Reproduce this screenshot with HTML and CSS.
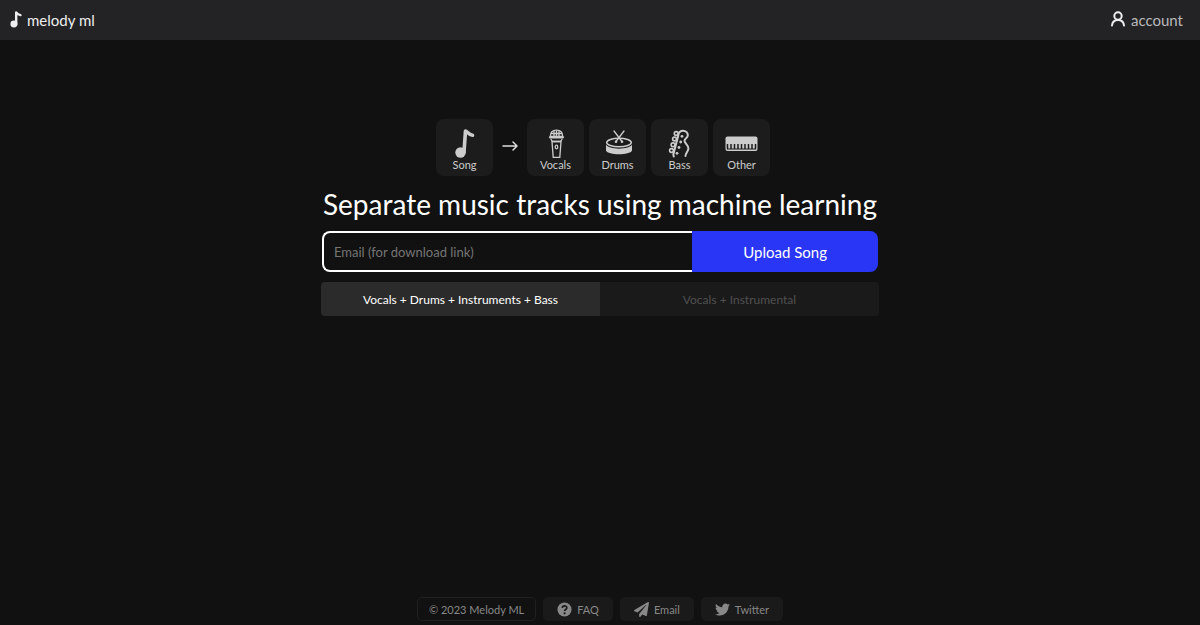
FILE: index.html
```html
<!DOCTYPE html>
<html lang="en">
<head>
  <meta charset="UTF-8" />
  <meta name="viewport" content="width=device-width, initial-scale=1.0" />
  <title>Melody ML</title>
  <link rel="stylesheet" href="styles.css">
</head>
<body>

  <header class="topbar">
    <a class="brand" href="#">
      <svg class="bar-icon note" viewBox="0 0 20 30" aria-hidden="true">
        <circle cx="6.500" cy="23.500" r="5.800" fill="currentColor"/>
        <path d="M10.300 24V4C12 6.500 14 8 17.500 8.500" fill="none" stroke="currentColor" stroke-width="4" stroke-linecap="round" stroke-linejoin="round"/>
      </svg>
      melody ml
    </a>
    <a class="account" href="#account">
      <svg class="bar-icon" viewBox="0 0 16 16" fill="none" stroke="currentColor" stroke-width="2" stroke-linecap="round" aria-hidden="true">
        <circle cx="8" cy="5" r="3.700"/>
        <path d="M2 14.500C2.400 11 4.600 9 8 9s5.600 2 6 5.500"/>
      </svg>
      account
    </a>
  </header>

  <main class="content">
    <!-- Song in, stems out -->
    <div class="stems">
      <div class="tile">
        <svg class="tile-icon" viewBox="0 0 34 32" aria-hidden="true">
          <circle cx="12.500" cy="25.500" r="5.200" fill="currentColor"/>
          <path d="M16 25L17.500 4C19.500 4.500 20.500 8 24.500 8.300" fill="none" stroke="currentColor" stroke-width="3.600" stroke-linecap="round" stroke-linejoin="round"/>
        </svg>
        <span>Song</span>
      </div>
      <svg class="arrow" viewBox="0 0 16 12" fill="none" stroke="currentColor" stroke-width="1.500" stroke-linecap="round" stroke-linejoin="round" aria-hidden="true">
        <path d="M1 6h14M11 2l4 4-4 4"/>
      </svg>
      <div class="tile">
        <svg class="tile-icon" viewBox="0 0 34 32" fill="none" stroke="currentColor" stroke-width="1.300" aria-hidden="true">
          <path d="M11.300 9.500C11.300 5.500 13.500 3.200 17.500 3.200S23.700 5.500 23.700 9.500z"/>
          <path d="M15 4v5.500M17.500 3.500v6M20 4v5.500M12 6.500h11"/>
          <path d="M11 10.300h13" stroke-width="2.200" stroke-linecap="round"/>
          <path d="M11.800 12l1.700 2.500h8l1.700-2.500"/>
          <path d="M13 14.500h9l-1.200 15.800h-6.600z"/>
          <ellipse cx="17.500" cy="20" rx="1.300" ry="1.800"/>
        </svg>
        <span>Vocals</span>
      </div>
      <div class="tile">
        <svg class="tile-icon" viewBox="0 0 34 32" aria-hidden="true">
          <path d="M5 17.500c2 5.500 24 5.500 26 0v6c-2 5-24 5-26 0z" fill="currentColor"/>
          <ellipse cx="18" cy="15.500" rx="12.300" ry="4.300" fill="#1c1c1c" stroke="currentColor" stroke-width="1.500"/>
          <path d="M13 4l8 10.500M23 4l-8 10.500" fill="none" stroke="currentColor" stroke-width="1.300" stroke-linecap="round"/>
          <circle cx="21" cy="14.800" r="1.300" fill="currentColor"/>
          <circle cx="15" cy="14.800" r="1.300" fill="currentColor"/>
        </svg>
        <span>Drums</span>
      </div>
      <div class="tile">
        <svg class="tile-icon" viewBox="0 0 34 32" fill="none" stroke="currentColor" stroke-width="2" stroke-linecap="round" stroke-linejoin="round" aria-hidden="true">
          <path d="M10.800 29.500L10.300 27.500 15.300 8.500C15.300 5.500 17.500 3.800 20 3.800c3 0 5 2 4.800 4.700-.2 2.500-3.300 3-3.300 5.300 0 2.500 3.900 4 3.900 7.700 0 2.500-2.900 4.500-2.900 7.500"/>
          <g stroke-width="1.600">
            <circle cx="13.200" cy="6.500" r="1.900"/>
            <circle cx="11.500" cy="12" r="1.900"/>
            <circle cx="10" cy="17.800" r="1.900"/>
            <circle cx="8.500" cy="23.500" r="1.900"/>
          </g>
          <g fill="currentColor" stroke="none">
            <circle cx="19" cy="9.300" r="1.400"/>
            <circle cx="17.700" cy="15" r="1.400"/>
            <circle cx="16" cy="20.500" r="1.400"/>
            <circle cx="14" cy="26.300" r="1.400"/>
          </g>
        </svg>
        <span>Bass</span>
      </div>
      <div class="tile">
        <svg class="tile-icon" viewBox="0 0 34 32" aria-hidden="true">
          <rect x="0.500" y="9.500" width="32" height="14.500" rx="2" fill="currentColor"/>
          <path d="M2.500 17v5M6 17v5M9.500 17v5M13 17v5M16.500 17v5M20 17v5M23.500 17v5M27 17v5M30.500 17v5" stroke="#1c1c1c" stroke-width="1.500"/>
          <path d="M2 22h29" stroke="#1c1c1c" stroke-width="1"/>
        </svg>
        <span>Other</span>
      </div>
    </div>

    <h1>Separate music tracks using machine learning</h1>

    <form class="upload">
      <input class="email" type="email" placeholder="Email (for download link)" aria-label="Email (for download link)">
      <button class="upload-btn" type="button">Upload Song</button>
    </form>

    <div class="modes">
      <button class="mode active" type="button">Vocals + Drums + Instruments + Bass</button>
      <button class="mode" type="button">Vocals + Instrumental</button>
    </div>
  </main>

  <footer class="footer">
    <span class="chip copyright">© 2023 Melody ML</span>
    <a class="chip" href="#faq">
      <svg class="chip-icon" viewBox="0 0 16 16" aria-hidden="true">
        <circle cx="8" cy="8" r="7.500" fill="currentColor"/>
        <path d="M5.700 6.300C5.700 3.300 10.500 3.300 10.500 6.200 10.500 8 8.100 7.900 8.100 9.700" fill="none" stroke="#1a1a1a" stroke-width="1.800"/>
        <circle cx="8.100" cy="12" r="1.200" fill="#1a1a1a"/>
      </svg>
      FAQ
    </a>
    <a class="chip" href="#email">
      <svg class="chip-icon" viewBox="0 0 512 512" fill="currentColor" aria-hidden="true">
        <path d="M476 3.200L12.500 270.600c-18.100 10.400-15.800 35.600 2.200 43.200L121 358.400l287.300-253.200c5.500-4.900 13.300 2.600 8.600 8.300L176 407v80.500c0 23.600 28.500 32.900 42.500 15.800L282 426l124.600 52.200c14.200 6 30.400-2.900 33-18.200l72-432C515 7.800 493.300-6.800 476 3.200z"/>
      </svg>
      Email
    </a>
    <a class="chip" href="#twitter">
      <svg class="chip-icon" viewBox="0 0 512 512" fill="currentColor" aria-hidden="true">
        <path d="M459.370 151.716c.325 4.548.325 9.097.325 13.645 0 138.720-105.583 298.558-298.558 298.558-59.452 0-114.680-17.219-161.137-47.106 8.447.974 16.568 1.299 25.340 1.299 49.055 0 94.213-16.568 130.274-44.832-46.132-.975-84.792-31.188-98.112-72.772 6.498.974 12.995 1.624 19.818 1.624 9.421 0 18.843-1.300 27.614-3.573-48.081-9.747-84.143-51.980-84.143-102.985v-1.299c13.969 7.797 30.214 12.670 47.431 13.319-28.264-18.843-46.781-51.005-46.781-87.391 0-19.492 5.197-37.360 14.294-52.954 51.655 63.675 129.300 105.258 216.365 109.807-1.624-7.797-2.599-15.918-2.599-24.040 0-57.828 46.782-104.934 104.934-104.934 30.213 0 57.502 12.670 76.670 33.137 23.715-4.548 46.456-13.320 66.599-25.340-7.798 24.366-24.366 44.833-46.132 57.827 21.117-2.273 41.584-8.122 60.426-16.243-14.292 20.791-32.161 39.308-52.628 54.253z"/>
      </svg>
      Twitter
    </a>
  </footer>

</body>
</html>
```
FILE: styles.css
```css
* {
  box-sizing: border-box;
}

body {
  margin: 0;
  min-height: 100vh;
  display: flex;
  flex-direction: column;
  background: #111111;
  color: #ffffff;
  font-family: Lato, sans-serif;
}

a {
  color: inherit;
  text-decoration: none;
}

button,
input {
  font: inherit;
}

/* Top bar */
.topbar {
  display: flex;
  justify-content: space-between;
  align-items: center;
  height: 40px;
  padding: 0 17px 0 10px;
  background: #232326;
  font-size: 15px;
}

.brand,
.account {
  display: flex;
  align-items: center;
  gap: 5px;
}

.brand {
  color: #eeeeee;
}

.account {
  color: #b8b8b8;
}

.bar-icon {
  width: 16px;
  height: 16px;
  margin-bottom: 3px;
  color: #eeeeee;
}

.bar-icon.note {
  width: 12px;
  height: 18px;
}

/* Main column */
.content {
  flex: 1;
  display: flex;
  flex-direction: column;
  align-items: center;
  padding: 79px 16px 24px;
}

.stems {
  display: flex;
  align-items: center;
  gap: 5px;
  padding-left: 6px;
}

.tile {
  display: flex;
  flex-direction: column;
  align-items: center;
  width: 57px;
  height: 57px;
  padding-top: 8px;
  border-radius: 8px;
  background: #1c1c1c;
  color: #cccccc;
  font-size: 11px;
  line-height: 12px;
}

.tile-icon {
  width: 34px;
  height: 32px;
}

.arrow {
  width: 16px;
  height: 12px;
  margin: 0 4px 4px;
  color: #dddddd;
}

h1 {
  margin: 11px 0 10px;
  font-size: 28px;
  line-height: 34px;
  font-weight: 400;
  text-align: center;
}

.upload {
  display: flex;
  width: 100%;
  max-width: 556px;
  height: 41px;
}

.email {
  width: 66.6%;
  padding: 0 10px;
  border: 2px solid #ffffff;
  border-right: 0;
  border-radius: 8px 0 0 8px;
  background: #111111;
  color: #ffffff;
  font-size: 13px;
}

.email::placeholder {
  color: #757575;
}

.upload-btn {
  width: 33.4%;
  padding: 0;
  border: 0;
  border-radius: 0 8px 8px 0;
  background: #2a36f5;
  color: #ffffff;
  font-size: 15px;
  cursor: pointer;
}

.modes {
  display: flex;
  width: 100%;
  max-width: 558px;
  height: 34px;
  margin-top: 10px;
  border-radius: 4px;
  overflow: hidden;
}

.mode {
  flex: 1;
  padding: 0;
  border: 0;
  background: #1a1a1a;
  color: #505050;
  font-size: 12px;
  cursor: pointer;
}

.mode.active {
  background: #2b2b2b;
  color: #ffffff;
}

/* Footer links */
.footer {
  display: flex;
  justify-content: center;
  gap: 7px;
  padding-bottom: 4px;
}

.chip {
  display: flex;
  align-items: center;
  gap: 5px;
  height: 24px;
  padding: 0 14px;
  border-radius: 5px;
  background: #1a1a1a;
  color: #888888;
  font-size: 11px;
}

.copyright {
  padding: 0 11px;
  border: 1px solid #202020;
  background: #111111;
}

.chip-icon {
  width: 15px;
  height: 15px;
}
```
